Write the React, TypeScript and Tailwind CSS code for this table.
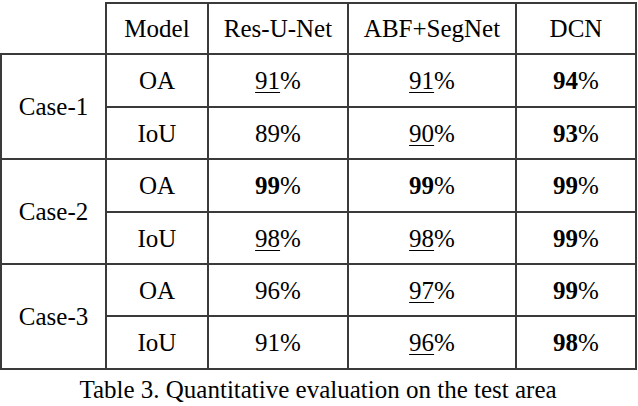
const rows = [
  {
    name: "Case-1",
    items: [
      { metric: "OA", h: "h-[53px]", res: ["91", "u"], abf: ["91", "u"], dcn: ["94", "b"] },
      { metric: "IoU", h: "h-[52px]", res: ["89", ""], abf: ["90", "u"], dcn: ["93", "b"] },
    ],
  },
  {
    name: "Case-2",
    items: [
      { metric: "OA", h: "h-[53px]", res: ["99", "b"], abf: ["99", "b"], dcn: ["99", "b"] },
      { metric: "IoU", h: "h-[52px]", res: ["98", "u"], abf: ["98", "u"], dcn: ["99", "b"] },
    ],
  },
  {
    name: "Case-3",
    items: [
      { metric: "OA", h: "h-[52px]", res: ["96", ""], abf: ["97", "u"], dcn: ["99", "b"] },
      { metric: "IoU", h: "h-[53px]", res: ["91", ""], abf: ["96", "u"], dcn: ["98", "b"] },
    ],
  },
];

function Value({ v }: { v: string[] }) {
  const [num, mark] = v;
  return (
    <span>
      <span
        className={
          mark === "u"
            ? "underline decoration-1 underline-offset-[3px]"
            : mark === "b"
              ? "font-bold"
              : ""
        }
      >
        {num}
      </span>
      %
    </span>
  );
}

const cell = "border-2 border-[#3a3a3a] text-center align-middle p-0";

export default function App() {
  return (
    <div className="w-[638px] h-[406px] bg-white text-black pt-[2px] font-['Liberation_Serif','Times_New_Roman',serif]">
      <table className="table-fixed border-collapse w-[637px] text-[25px] leading-none">
        <colgroup>
          <col className="w-[105px]" />
          <col className="w-[102px]" />
          <col className="w-[140px]" />
          <col className="w-[168px]" />
          <col className="w-[120px]" />
        </colgroup>
        <thead>
          <tr className="h-[51px]">
            <th className="p-0" />
            <th className={`${cell} font-normal`}>Model</th>
            <th className={`${cell} font-normal`}>Res-U-Net</th>
            <th className={`${cell} font-normal`}>ABF+SegNet</th>
            <th className={`${cell} font-normal`}>DCN</th>
          </tr>
        </thead>
        <tbody>
          {rows.map((g) =>
            g.items.map((r, i) => (
              <tr key={g.name + r.metric} className={r.h}>
                {i === 0 && (
                  <td rowSpan={2} className={cell}>
                    {g.name}
                  </td>
                )}
                <td className={cell}>{r.metric}</td>
                <td className={cell}>
                  <Value v={r.res} />
                </td>
                <td className={cell}>
                  <Value v={r.abf} />
                </td>
                <td className={cell}>
                  <Value v={r.dcn} />
                </td>
              </tr>
            )),
          )}
        </tbody>
      </table>
      <p className="mt-[7px] text-center text-[25px] leading-none pr-[2px]">
        Table 3. Quantitative evaluation on the test area
      </p>
    </div>
  );
}
